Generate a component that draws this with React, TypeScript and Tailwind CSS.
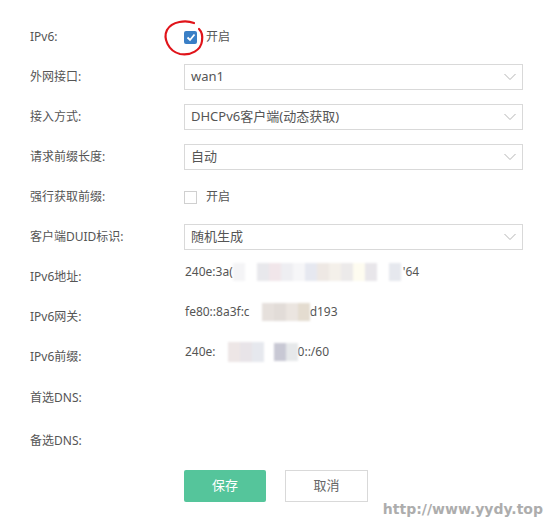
import React from "react";

const font = { fontFamily: '"Noto Sans", "Noto Sans CJK SC", sans-serif' };

function Chevron() {
  return (
    <svg width="12" height="7" viewBox="0 0 12 7" className="absolute right-[6px] top-1/2 -translate-y-1/2">
      <path d="M0.5 0.5 L6 6 L11.5 0.5" fill="none" stroke="#b5b5b5" strokeWidth="1" />
    </svg>
  );
}

function Select({ value }: { value: string }) {
  return (
    <div className="relative flex h-[26px] w-[339px] items-center border border-[#d9d9d9] bg-white pl-[6px] text-[13px] text-[#555]">
      {value}
      <Chevron />
    </div>
  );
}

function Row({ label, children, h = "h-[40px]" }: { label: string; children?: React.ReactNode; h?: string }) {
  return (
    <div className={`flex ${h} items-center`}>
      <div className="w-[154px] shrink-0 text-[12px] text-[#555]">{label}</div>
      <div className="flex flex-1 items-center">{children}</div>
    </div>
  );
}

function Blur({ colors, h = "h-[18px]" }: { colors: string[]; h?: string }) {
  return (
    <span className="inline-flex items-stretch blur-[1px]">
      {colors.map((c, i) => (
        <span key={i} className={`${h} w-[12px]`} style={{ backgroundColor: c }} />
      ))}
    </span>
  );
}

export default function App() {
  return (
    <div className="relative h-[523px] w-[548px] overflow-hidden bg-white" style={font}>
      <div className="flex flex-col pl-[30px] pt-[17px]">
        <Row label="IPv6:">
          <div className="relative flex h-[18px] items-center">
            <span className="flex h-[13px] w-[13px] items-center justify-center rounded-[2px] bg-[#3a7fc6]">
              <svg width="10" height="9" viewBox="0 0 10 9">
                <path d="M1.5 4.5 L4 7 L8.5 1.5" fill="none" stroke="#fff" strokeWidth="1.8" />
              </svg>
            </span>
            <span className="ml-[9px] text-[12px] text-[#555]">开启</span>
            <svg
              viewBox="0 0 44 38"
              className="absolute left-[-21px] top-[-9px] h-[38px] w-[44px] max-w-none overflow-visible"
            >
              <path
                d="M31 4 C 23 1, 9 2, 4 11 C 0 19, 5 32, 17 35 C 28 37, 38 31, 39 22 C 40 16, 38 12, 36 10"
                fill="none"
                stroke="#e0141a"
                strokeWidth="2.2"
                strokeLinecap="round"
              />
            </svg>
          </div>
        </Row>
        <Row label="外网接口:">
          <Select value="wan1" />
        </Row>
        <Row label="接入方式:">
          <Select value="DHCPv6客户端(动态获取)" />
        </Row>
        <Row label="请求前缀长度:">
          <Select value="自动" />
        </Row>
        <Row label="强行获取前缀:">
          <span className="h-[13px] w-[13px] border border-[#d0d0d0] bg-white" />
          <span className="ml-[9px] text-[12px] text-[#555]">开启</span>
        </Row>
        <Row label="客户端DUID标识:">
          <Select value="随机生成" />
        </Row>
        <Row label="IPv6地址:">
          <div className="-mt-[10px] flex items-center text-[12px] text-[#555]">
            <span className="ml-[1px]">240e:3a(</span>
            <Blur colors={["#f4f4f6", "#ffffff", "#e8e8ec", "#f1e6ea", "#eeeef2", "#f6f6f8", "#e6e8f0", "#eee8e4", "#f4f0ea", "#eceaea", "#fefcf0", "#e8e6ea", "#ffffff", "#e6e8ee"]} />
            <span className="ml-[2px]">'64</span>
          </div>
        </Row>
        <Row label="IPv6网关:">
          <div className="-mt-[10px] flex items-center text-[12px] text-[#555]">
            <span className="ml-[1px]">fe80::8a3f:c</span>
            <Blur colors={["#ffffff", "#e6e0dc", "#e2dcd8", "#ebe5e0", "#e4dcd0"]} />
            <span>d193</span>
          </div>
        </Row>
        <Row label="IPv6前缀:">
          <div className="-mt-[10px] flex items-center text-[12px] text-[#555]">
            <span className="ml-[1px]">240e:</span>
            <Blur colors={["#ffffff", "#ede6e6", "#e8e4e8", "#e6e8ee"]} h="h-[20px]" />
            <span className="w-[10px]" />
            <Blur colors={["#c8c8d4", "#e6e8ea"]} h="h-[18px]" />
            <span>0::/60</span>
          </div>
        </Row>
        <Row label="首选DNS:" h="h-[42px]" />
        <Row label="备选DNS:" h="h-[44px]" />
        <div className="mt-[7px] flex pl-[154px]">
          <button className="flex h-[32px] w-[82px] items-center justify-center rounded-[2px] bg-[#55c59b] text-[13px] text-white">
            保存
          </button>
          <button className="ml-[19px] flex h-[32px] w-[83px] items-center justify-center border border-[#d9d9d9] bg-white text-[13px] text-[#666]">
            取消
          </button>
        </div>
      </div>
      <div
        className="absolute bottom-[3px] right-[5px] text-[14px] font-bold text-[#adadad]"
        style={{ fontFamily: '"DejaVu Sans", sans-serif' }}
      >
        http://www.yydy.top
      </div>
    </div>
  );
}
